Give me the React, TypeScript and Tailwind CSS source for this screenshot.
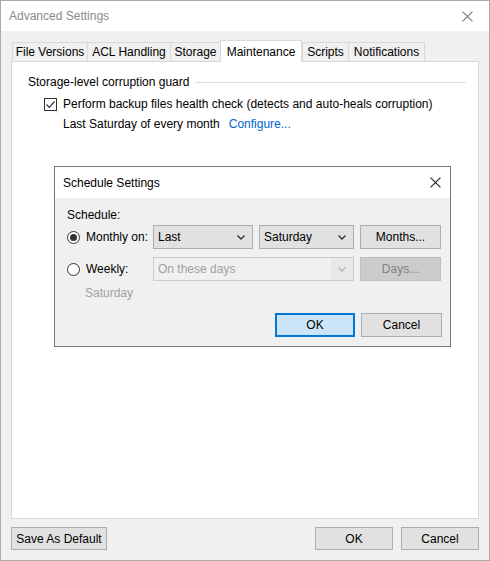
import { ReactNode } from "react";

const FONT = "font-['Segoe_UI','Liberation_Sans',Arial,sans-serif] text-[12px]";

const tabs = [
  { label: "File Versions", w: "w-[75px]" },
  { label: "ACL Handling", w: "w-[83px]" },
  { label: "Storage", w: "w-[50px]" },
  { label: "Maintenance", w: "w-[82px]", active: true },
  { label: "Scripts", w: "w-[46px]" },
  { label: "Notifications", w: "w-[77px] border-r" },
];

function CloseIcon({ className }: { className: string }) {
  return (
    <svg viewBox="0 0 10 10" className={className} fill="none" stroke="currentColor" strokeWidth="1">
      <path d="M0.5 0.5 L9.5 9.5 M9.5 0.5 L0.5 9.5" />
    </svg>
  );
}

function Chevron({ muted }: { muted?: boolean }) {
  return (
    <svg viewBox="0 0 8 5" className={`h-[5px] w-[8px] ${muted ? "text-[#b4b4b4]" : "text-[#333]"}`} fill="none" stroke="currentColor" strokeWidth="1.4">
      <path d="M0.5 0.5 L4 4 L7.5 0.5" />
    </svg>
  );
}

function Radio({ checked }: { checked?: boolean }) {
  return (
    <span className="flex h-[13px] w-[13px] items-center justify-center rounded-full border border-[#333] bg-white">
      {checked && <span className="h-[7px] w-[7px] rounded-full bg-[#333]" />}
    </span>
  );
}

function Combo({ value, w, disabled }: { value: string; w: string; disabled?: boolean }) {
  return (
    <div
      className={`flex h-[24px] ${w} items-center border ${
        disabled ? "border-[#cccccc] bg-[#f0f0f0] text-[#a0a0a0]" : "border-[#adadad] bg-[#e1e1e1] text-black"
      }`}
    >
      <span className="flex-1 pl-[4px]">{value}</span>
      <span className={`flex h-full w-[22px] items-center justify-center ${disabled ? "bg-[#e8e8e8]" : ""}`}>
        <Chevron muted={disabled} />
      </span>
    </div>
  );
}

function Btn({ children, w, h = "h-[24px]", variant }: { children: ReactNode; w: string; h?: string; variant?: "default" | "disabled" }) {
  const look =
    variant === "default"
      ? "border-2 border-[#0078d7] bg-[#cce4f7]"
      : variant === "disabled"
        ? "border border-[#bfbfbf] bg-[#cccccc] text-[#838383]"
        : "border border-[#adadad] bg-[#e1e1e1]";
  return <div className={`flex ${h} ${w} items-center justify-center ${look}`}>{children}</div>;
}

export default function App() {
  return (
    <div className={`relative flex h-[561px] w-[490px] flex-col border border-[#aaaaaa] bg-[#f0f0f0] text-black ${FONT}`}>
      <div className="flex h-[30px] items-center justify-between bg-white pl-[8px] pr-[16px]">
        <span className="text-[#8a8a8a]">Advanced Settings</span>
        <CloseIcon className="h-[11px] w-[11px] text-[#777]" />
      </div>

      <div className="mt-[9px] flex h-[21px] items-end pl-[11px]">
        {tabs.map((t) =>
          t.active ? (
            <div
              key={t.label}
              className={`relative z-10 -mb-px flex h-[22px] ${t.w} items-start justify-center border-x border-t border-[#d9d9d9] bg-white pt-[2px]`}
            >
              {t.label}
            </div>
          ) : (
            <div
              key={t.label}
              className={`flex h-[19px] ${t.w} items-center justify-center border-l border-t border-[#d9d9d9] bg-[#f0f0f0]`}
            >
              {t.label}
            </div>
          ),
        )}
      </div>

      <div className="ml-[10px] flex h-[458px] w-[468px] flex-col border border-[#d9d9d9] bg-white pl-[16px] pr-[12px]">
        <div className="mt-[12px] flex h-[16px] items-center">
          <span>Storage-level corruption guard</span>
          <span className="ml-[6px] h-px flex-1 bg-[#dcdcdc]" />
        </div>
        <div className="ml-[16px] mt-[6px] flex h-[16px] items-center">
          <span className="flex h-[13px] w-[13px] items-center justify-center border border-[#333] bg-white">
            <svg viewBox="0 0 11 11" className="h-[11px] w-[11px]" fill="none" stroke="#333" strokeWidth="1.2">
              <path d="M1.5 5.5 L4.3 8.3 L9.5 2.5" />
            </svg>
          </span>
          <span className="ml-[6px]">Perform backup files health check (detects and auto-heals corruption)</span>
        </div>
        <div className="ml-[35px] mt-[4px] flex h-[16px] items-center">
          <span>Last Saturday of every month</span>
          <span className="ml-[9px] text-[#0066cc]">Configure...</span>
        </div>
      </div>

      <div className="mt-[8px] flex items-center px-[10px]">
        <Btn w="w-[96px]" h="h-[23px]">Save As Default</Btn>
        <div className="flex-1" />
        <Btn w="w-[78px]" h="h-[23px]">OK</Btn>
        <div className="w-[8px]" />
        <Btn w="w-[78px]" h="h-[23px]">Cancel</Btn>
      </div>

      {/* modal over the tab page */}
      <div className="absolute left-[53px] top-[165px] flex h-[181px] w-[397px] flex-col border border-[#777777] bg-[#f0f0f0]">
        <div className="flex h-[31px] items-center justify-between bg-white pl-[8px] pr-[9px]">
          <span>Schedule Settings</span>
          <CloseIcon className="h-[11px] w-[11px] text-[#222]" />
        </div>
        <div className="flex flex-col pl-[12px] pr-[8px]">
          <div className="mt-[9px] flex h-[16px] items-center">Schedule:</div>
          <div className="mt-[2px] flex items-center">
            <Radio checked />
            <span className="ml-[6px] w-[67px]">Monthly on:</span>
            <Combo value="Last" w="w-[100px]" />
            <div className="w-[6px]" />
            <Combo value="Saturday" w="w-[95px]" />
            <div className="w-[6px]" />
            <Btn w="w-[81px]">Months...</Btn>
          </div>
          <div className="mt-[8px] flex items-center">
            <Radio />
            <span className="ml-[6px] w-[67px]">Weekly:</span>
            <Combo value="On these days" w="w-[201px]" disabled />
            <div className="w-[6px]" />
            <Btn w="w-[81px]" variant="disabled">Days...</Btn>
          </div>
          <div className="ml-[18px] mt-[4px] flex h-[16px] items-center text-[#a0a0a0]">Saturday</div>
          <div className="mt-[12px] flex items-center justify-end">
            <Btn w="w-[80px]" variant="default">OK</Btn>
            <div className="w-[6px]" />
            <Btn w="w-[81px]">Cancel</Btn>
          </div>
        </div>
      </div>
    </div>
  );
}
